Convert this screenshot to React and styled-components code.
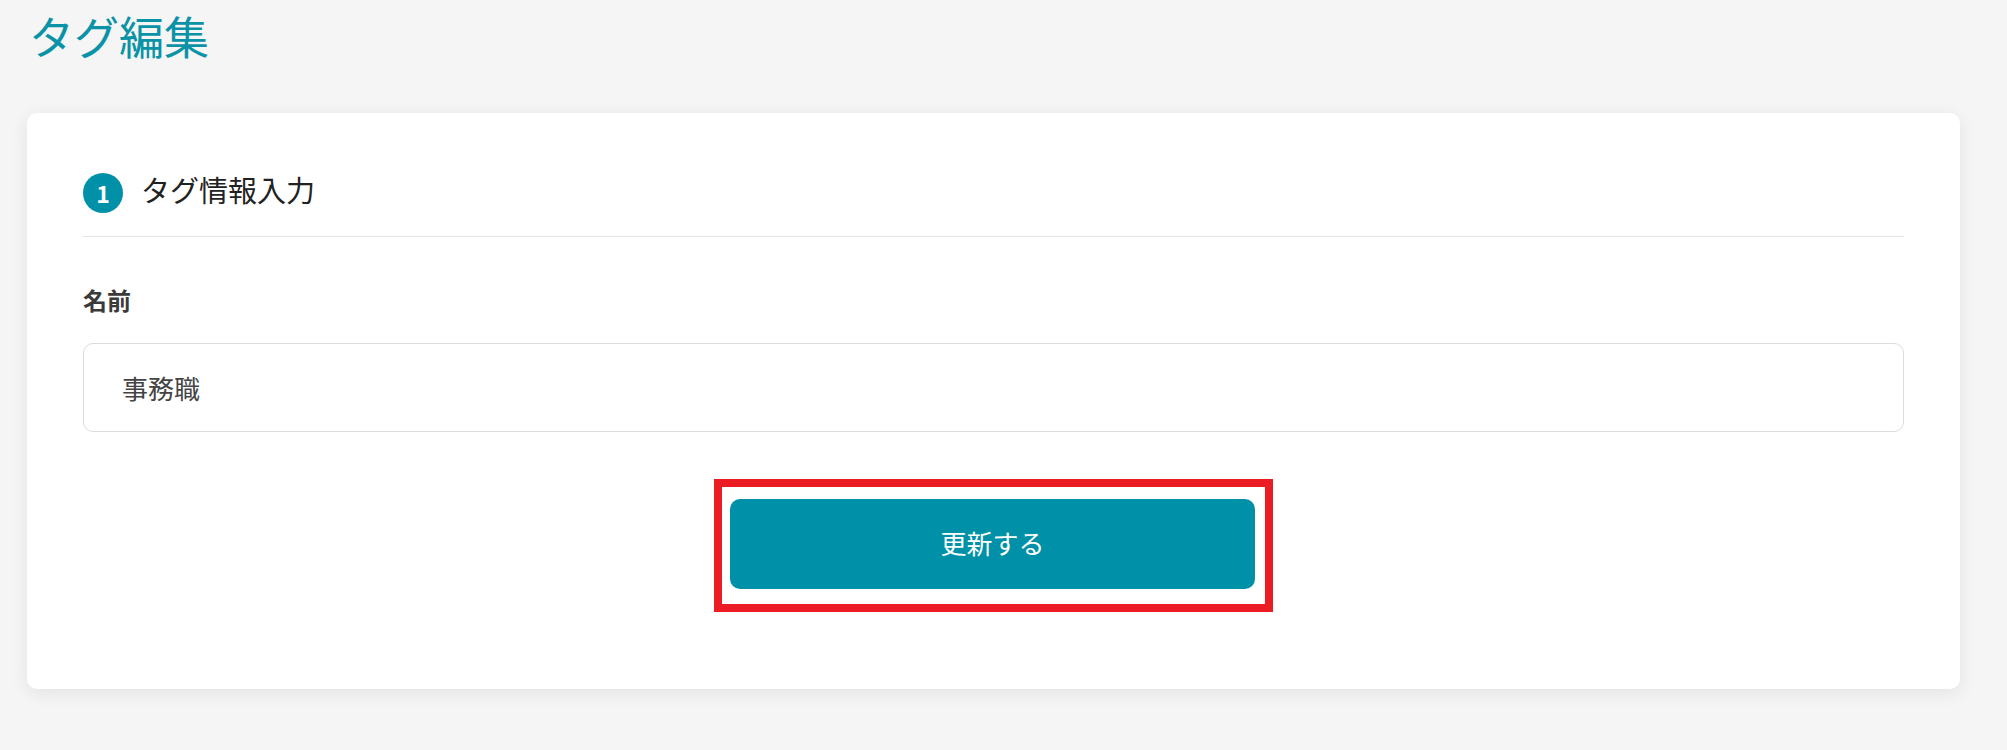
import React from "react";
import styled, { createGlobalStyle } from "styled-components";

const GlobalStyle = createGlobalStyle`
  html, body {
    margin: 0;
    padding: 0;
    background: #f5f5f5;
    font-family: "Noto Sans CJK JP", "Noto Sans", sans-serif;
  }
`;

const Page = styled.div`
  padding: 0 47px 40px 27px;
`;

const Title = styled.h1`
  margin: 0;
  padding: 6px 0 0 2px;
  height: 113px;
  box-sizing: border-box;
  font-size: 45px;
  font-weight: 400;
  line-height: 60px;
  color: #0a92a7;
`;

const Card = styled.div`
  background: #fff;
  border-radius: 10px;
  box-shadow: 0 4px 18px rgba(0, 0, 0, 0.08);
  padding: 60px 56px 77px;
`;

const SectionHead = styled.div`
  display: flex;
  align-items: flex-start;
  gap: 18px;
  padding-bottom: 23px;
  border-bottom: 1px solid #e6e6e6;
`;

const StepBadge = styled.span`
  display: flex;
  align-items: center;
  justify-content: center;
  width: 40px;
  height: 40px;
  border-radius: 50%;
  background: #0091a8;
  color: #fff;
  font-size: 23px;
  font-weight: 600;
`;

const SectionTitle = styled.h2`
  margin: 0;
  font-size: 29px;
  line-height: 32px;
  font-weight: 400;
  color: #222;
`;

const Field = styled.div`
  display: flex;
  flex-direction: column;
  gap: 28px;
  padding-top: 48px;
`;

const Label = styled.label`
  font-size: 24px;
  font-weight: 700;
  color: #3a3a3a;
  line-height: 30px;
`;

const Input = styled.input`
  height: 89px;
  box-sizing: border-box;
  border: 1px solid #dcdcdc;
  border-radius: 10px;
  padding: 0 38px;
  font-family: inherit;
  font-size: 26px;
  color: #444;
  outline: none;
`;

const Actions = styled.div`
  display: flex;
  justify-content: center;
  padding-top: 47px;
`;

const Highlight = styled.div`
  border: 8px solid #ec1c24;
  padding: 12px 10px 15px 8px;
`;

const SubmitButton = styled.button`
  display: block;
  width: 525px;
  height: 90px;
  padding: 0 0 4px;
  border: none;
  border-radius: 10px;
  background: #0091a8;
  color: #fff;
  font-family: inherit;
  font-size: 26px;
  cursor: pointer;
`;

export default function App() {
  return (
    <>
      <GlobalStyle />
      <Page>
        <Title>タグ編集</Title>
        <Card>
          <SectionHead>
            <StepBadge>1</StepBadge>
            <SectionTitle>タグ情報入力</SectionTitle>
          </SectionHead>
          <Field>
            <Label>名前</Label>
            <Input defaultValue="事務職" />
          </Field>
          <Actions>
            <Highlight>
              <SubmitButton>更新する</SubmitButton>
            </Highlight>
          </Actions>
        </Card>
      </Page>
    </>
  );
}
